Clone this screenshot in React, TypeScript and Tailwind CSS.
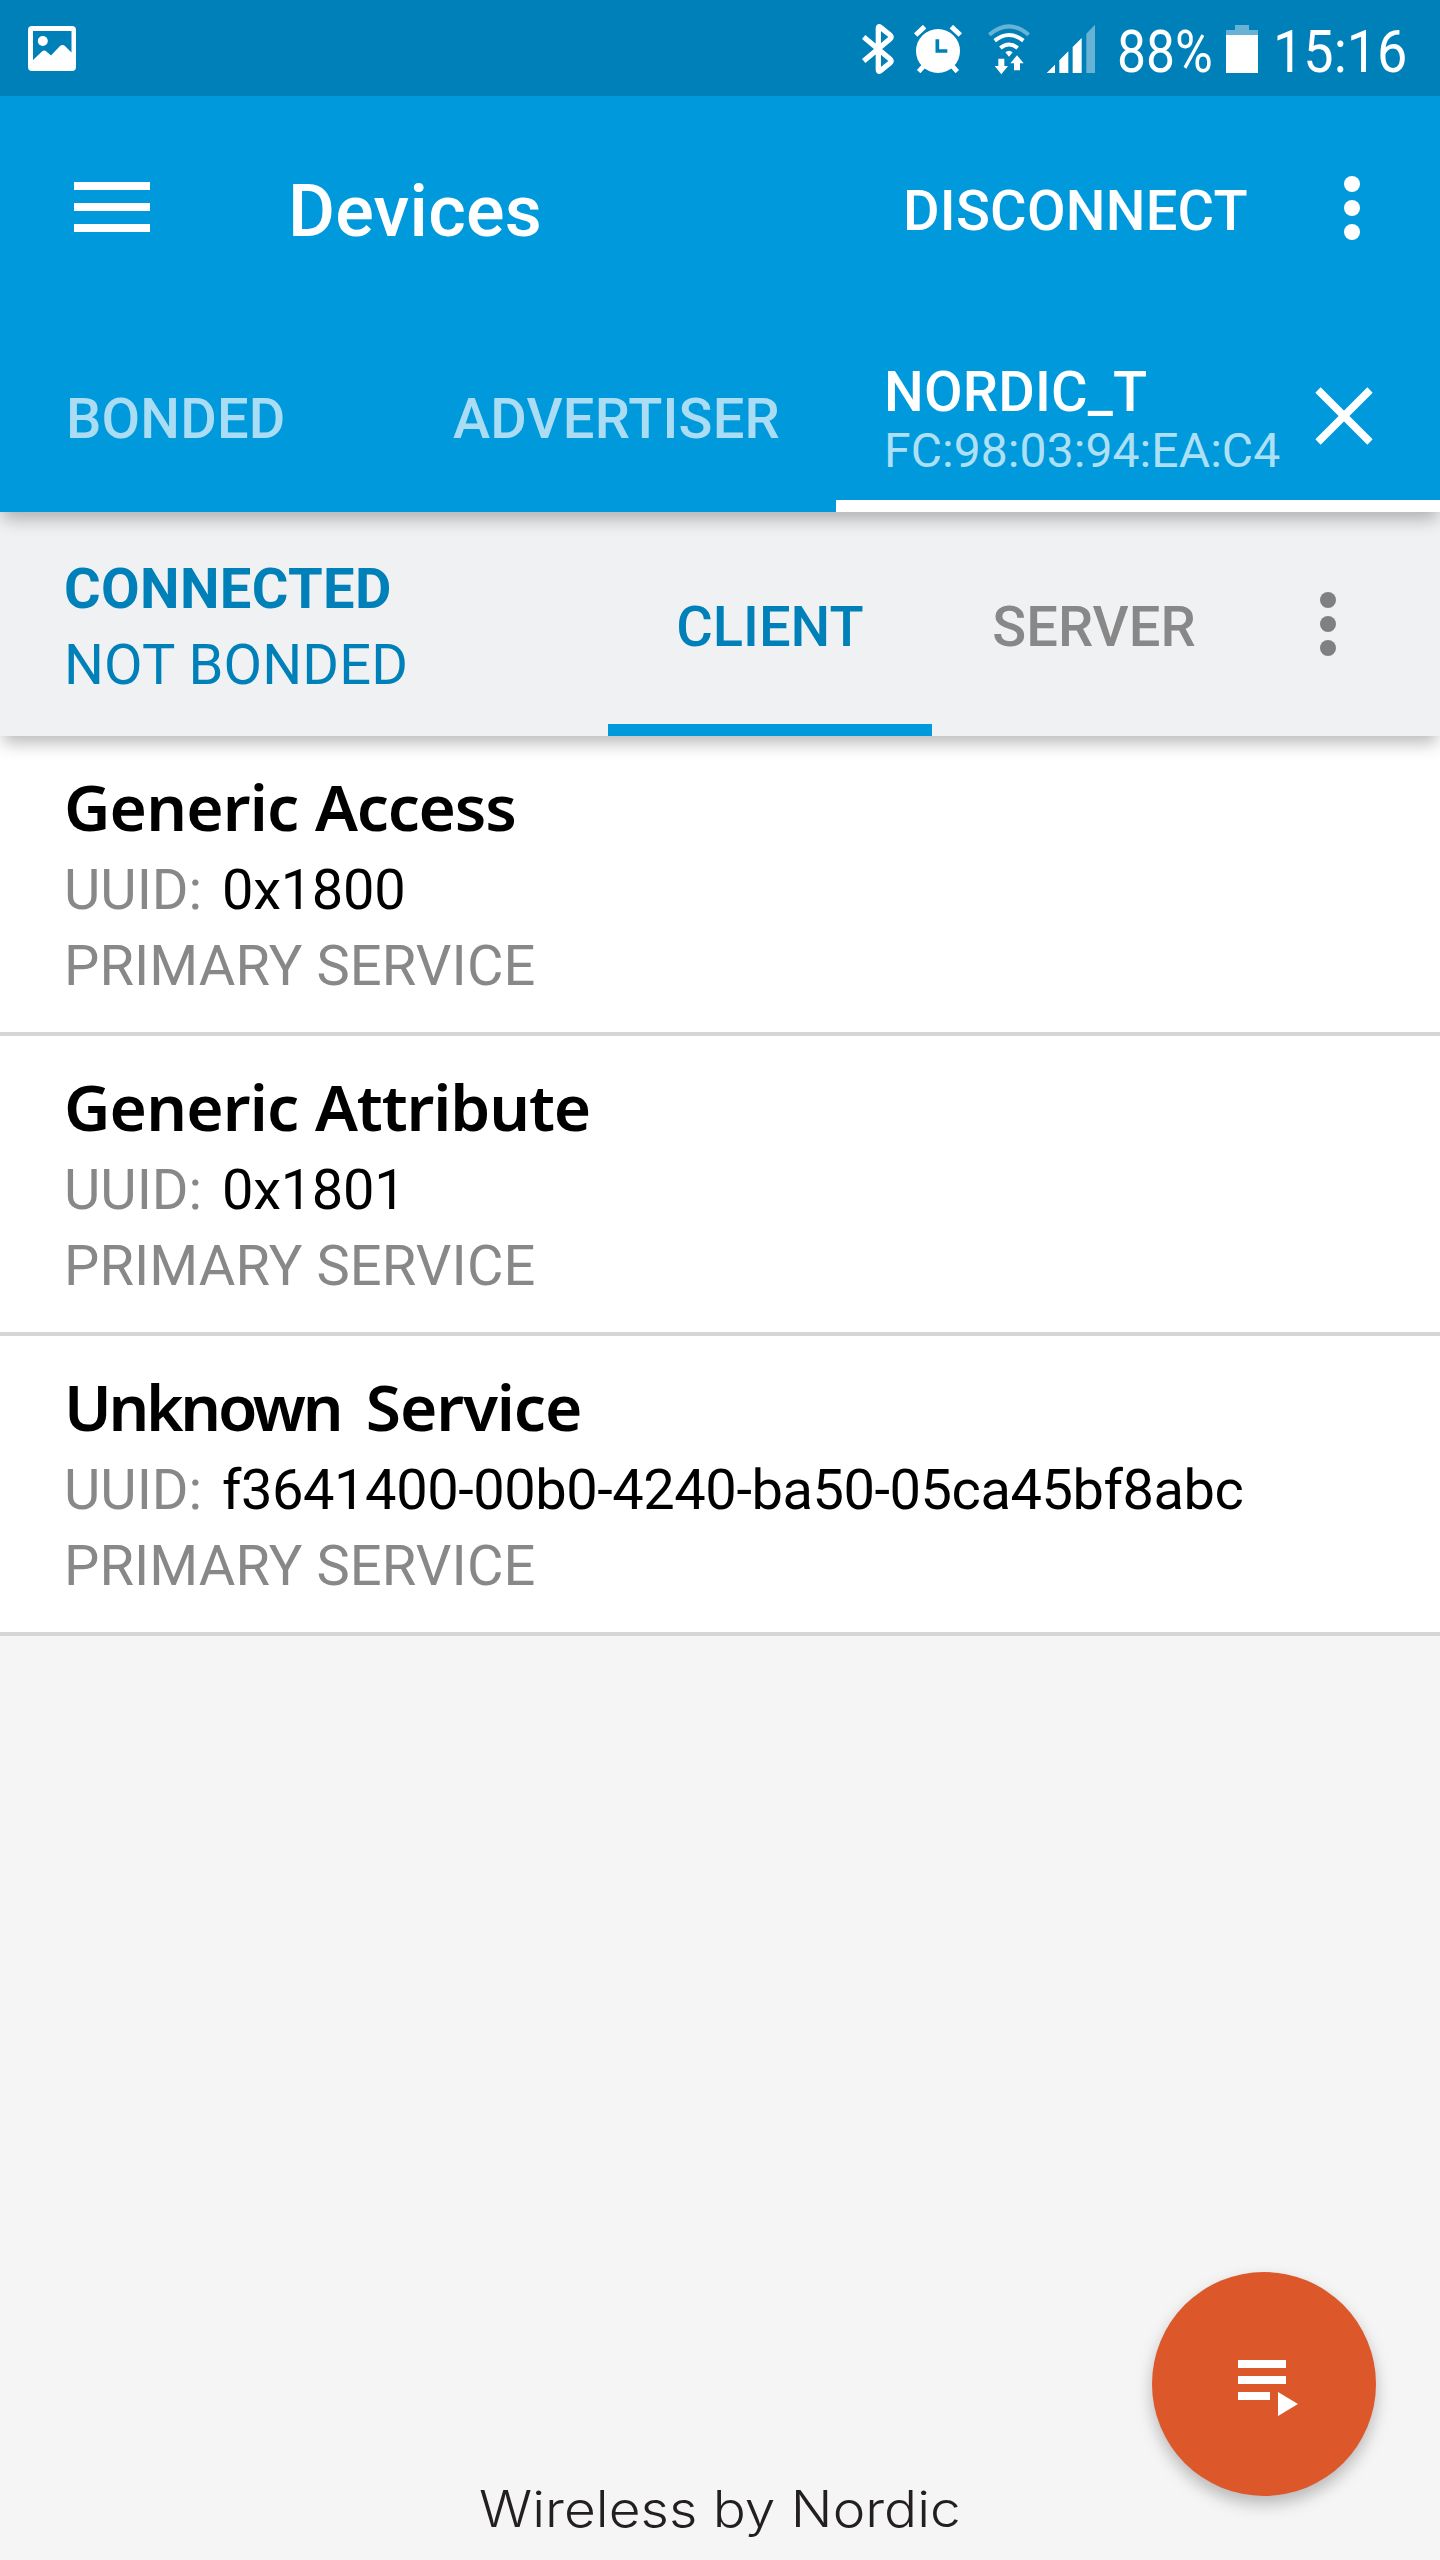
function StatusBar() {
  return (
    <div className="flex h-24 items-start bg-[#0080b8] text-white">
      <svg className="ml-7 mt-[26px] h-[45px] w-12" viewBox="0 0 48 45">
        <path
          fillRule="evenodd"
          fill="#fff"
          d="M4 0H44Q48 0 48 4V41Q48 45 44 45H4Q0 45 0 41V4Q0 0 4 0ZM5 5V34L14 25.5Q16.500 23.500 19 26L23 29.500L32 20Q34.500 18 37 20L43.500 26.500V5Z"
        />
        <ellipse cx="14.800" cy="15" rx="5" ry="5" fill="#fff" />
      </svg>
      <svg className="ml-[786px] mt-6 h-[50px] w-8" viewBox="22 27 96 150">
        <path
          d="M27 66L106 132Q113 138 106 144L76 168Q71 171 71 165V39Q71 33 76 36L106 60Q113 66 106 72L27 138"
          fill="none"
          stroke="#fff"
          strokeWidth="16"
        />
      </svg>
      <svg className="ml-5 mt-[25px] h-12 w-12" viewBox="176 30 144 144">
        <circle cx="248" cy="108" r="66" fill="#fff" />
        <path d="M181 60L208 35M288 35L315 60" stroke="#fff" strokeWidth="15" />
        <path d="M207 151L190 170M289 151L306 170" stroke="#fff" strokeWidth="14" />
        <path d="M246 73V108H276" fill="none" stroke="#0080b8" strokeWidth="11" />
      </svg>
      <svg className="ml-[26px] mt-6 h-[51px] w-[42px]" viewBox="400 26 126 153">
        <g fill="none" stroke="#fff" strokeWidth="12">
          <path d="M404 58Q463 8 522 58" stroke="#68b3d5" />
          <path d="M420 76Q463 42 506 76" />
          <path d="M437 98Q463 77 489 98" />
        </g>
        <path d="M452 111Q463 102 474 111L463 124ZM431 130H449V152H460L440 177L420 152H431ZM478 165H496V144H507L487 120L467 144H478Z" fill="#fff" />
      </svg>
      <svg className="ml-4 mt-6 h-[49px] w-[50px]" viewBox="575 27 150 147">
        <path d="M577 174L602 149V174ZM615 174V136L642 109V174ZM655 174V96L682 69V174Z" fill="#fff" />
        <path d="M696 174V56L722 29V174Z" fill="#68b3d5" />
      </svg>
      <div className="ml-[21px] mt-1.5 w-[106px] whitespace-nowrap text-[60px] leading-[92px]">
        <div className="w-max origin-left scale-x-[0.86]">88%</div>
      </div>
      <svg className="ml-[3px] mt-[25px] h-12 w-8" viewBox="0 0 32 48">
        <path d="M9 0H23V5H32V10H0V5H9Z" fill="#68b3d5" />
        <path d="M0 10H32V48H0Z" fill="#fff" />
      </svg>
      <div className="ml-[15px] mt-1.5 whitespace-nowrap text-[60px] leading-[92px]">
        <div className="w-max origin-left scale-x-[0.9]">15:16</div>
      </div>
    </div>
  );
}

function Dots({ className }: { className: string }) {
  return (
    <div className={`flex w-4 flex-col gap-2 ${className}`}>
      <span className="size-4 rounded-full bg-current" />
      <span className="size-4 rounded-full bg-current" />
      <span className="size-4 rounded-full bg-current" />
    </div>
  );
}

function Header() {
  return (
    <header className="relative z-20 bg-[#0099dc] text-white shadow-[0_10px_16px_-3px_rgba(0,0,0,0.28)]">
      <StatusBar />
      <div className="flex h-56 items-start whitespace-nowrap font-medium">
        <div className="ml-[74px] mt-[86px] flex w-[76px] flex-col gap-[13px]">
          <span className="h-2 bg-white" />
          <span className="h-2 bg-white" />
          <span className="h-2 bg-white" />
        </div>
        <h1 className="ml-[138px] w-[615px] pt-[68px] text-[72px] leading-[96px] font-medium tracking-[0.25px]">Devices</h1>
        <button className="w-[441px] pt-[83px] text-left text-[56px] leading-[64px] tracking-[0.25px]">DISCONNECT</button>
        <Dots className="mt-20" />
      </div>
      <nav className="flex h-48 whitespace-nowrap text-[56px] font-medium tracking-[0.2px]">
        <div className="w-[386px] pl-[66px] pt-[67px] leading-[64px] text-[#aaddf4]">BONDED</div>
        <div className="w-[450px] pl-[67px] pt-[67px] leading-[64px] text-[#aaddf4]">ADVERTISER</div>
        <div className="flex flex-1 border-b-12 border-white">
          <div className="w-[479px] pl-12 pt-10">
            <div className="leading-[64px]">NORDIC_T</div>
            <div className="text-[48px] leading-[54px] font-normal tracking-[0.1px] text-[#aee0f5]">FC:98:03:94:EA:C4</div>
          </div>
          <svg className="mt-[67px] size-[58px]" viewBox="0 0 58 58">
            <path d="M3 3L55 55M55 3L3 55" stroke="#fff" strokeWidth="7.500" />
          </svg>
        </div>
      </nav>
    </header>
  );
}

function ConnectionBar() {
  return (
    <section className="relative z-10 flex h-56 whitespace-nowrap bg-[#eff1f3] text-[56px] text-[#0080b8] shadow-[0_10px_16px_-3px_rgba(0,0,0,0.28)]">
      <div className="w-[608px] pl-16 pt-[39px] leading-[76px]">
        <div className="font-bold tracking-[0.4px]">CONNECTED</div>
        <div className="tracking-[0.15px]">NOT BONDED</div>
      </div>
      <div className="w-[324px] border-b-12 border-[#0099dc] pt-[83px] text-center leading-[64px] font-medium">CLIENT</div>
      <div className="w-[324px] pt-[83px] text-center leading-[64px] font-medium text-[#888]">SERVER</div>
      <Dots className="ml-16 mt-20 text-[#808080]" />
    </section>
  );
}

type ServiceProps = {
  first: string;
  firstClass: string;
  second: string;
  secondClass: string;
  uuid: string;
  uuidClass: string;
};

function Service({ first, firstClass, second, secondClass, uuid, uuidClass }: ServiceProps) {
  return (
    <li className="h-[300px] whitespace-nowrap border-b-4 border-[#d6d6d6] bg-white pl-16 pt-[31px] text-[56px] text-[#888]">
      <h2 className="font-['Noto_Sans'] text-[64px] leading-20 font-semibold text-black">
        <span className={firstClass}>{first}</span> <span className={secondClass}>{second}</span>
      </h2>
      <div className="flex pt-[5px] leading-[76px]">
        <span className="w-[158px]">UUID:</span>
        <span className={`text-black ${uuidClass}`}>{uuid}</span>
      </div>
      <div className="leading-[76px] tracking-[0.1px]">PRIMARY SERVICE</div>
    </li>
  );
}

export default function App() {
  return (
    <div className="relative flex h-[2560px] w-[1440px] flex-col overflow-hidden bg-[#f5f5f5] font-[Roboto,sans-serif]">
      <Header />
      <ConnectionBar />
      <ul>
        <Service
          first="Generic"
          firstClass="tracking-[-0.85px]"
          second="Access"
          secondClass="tracking-[-1.2px]"
          uuid="0x1800"
          uuidClass="tracking-[-0.3px]"
        />
        <Service
          first="Generic"
          firstClass="tracking-[-0.85px]"
          second="Attribute"
          secondClass="tracking-[-1.1px]"
          uuid="0x1801"
          uuidClass="tracking-[-0.3px]"
        />
        <Service
          first="Unknown"
          firstClass="mr-[9px] tracking-[-3.3px]"
          second="Service"
          secondClass="tracking-[-1.1px]"
          uuid="f3641400-00b0-4240-ba50-05ca45bf8abc"
          uuidClass="tracking-[-0.45px]"
        />
      </ul>
      <footer className="mt-auto flex h-[100px] justify-center pt-[17px] font-[Inter,sans-serif] text-[50px] leading-[64px] font-light whitespace-nowrap text-[#231f20]">
        <span className="scale-x-[1.1]">Wireless by Nordic</span>
      </footer>
      <button className="absolute bottom-16 right-16 flex size-56 items-center justify-center rounded-full bg-[#dc582a] shadow-[0_8px_16px_rgba(0,0,0,0.25)]">
        <svg className="size-24" viewBox="0 0 96 96" fill="#fff">
          <path d="M22 24H70V32H22ZM22 40H70V48H22ZM22 56H54V64H22ZM62 56L82 68L62 80Z" />
        </svg>
      </button>
    </div>
  );
}
